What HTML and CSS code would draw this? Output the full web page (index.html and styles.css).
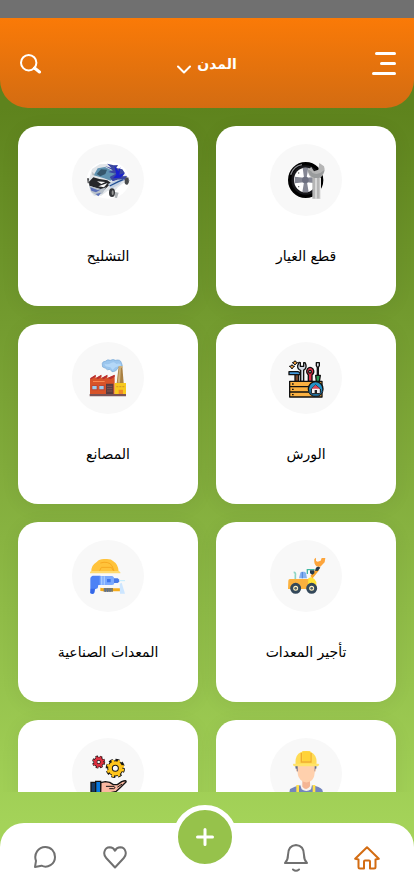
FILE: index.html
```html
<!DOCTYPE html>
<html lang="ar" dir="rtl">

<head>
    <meta charset="utf-8">
    <title>المدن</title>
    <meta name="viewport" content="width=device-width, initial-scale=1.0">
    <link rel="stylesheet" href="styles.css">
</head>

<body>
    <div class="status-bar"></div>
    <header class="header">
        <button class="icon-btn" type="button" aria-label="القائمة">
            <svg width="24" height="24" viewBox="0 0 24 24" fill="none" stroke="#fff" stroke-width="3" stroke-linecap="round">
                <path d="M4.500 1.500H22.500M9.500 11.500H22.500M1.500 21.500H22.500" />
            </svg>
        </button>
        <button class="city" type="button">
            <span>المدن</span>
            <svg width="14" height="9" viewBox="0 0 14 9" fill="none" stroke="#fff" stroke-width="2" stroke-linecap="round" stroke-linejoin="round">
                <path d="M1 1.500L7 7.500L13 1.500" />
            </svg>
        </button>
        <button class="icon-btn" type="button" aria-label="بحث">
            <svg width="22" height="20" viewBox="0 0 22 20" fill="none" stroke="#fff" stroke-linecap="round">
                <circle cx="8.700" cy="8.700" r="7.700" stroke-width="2" />
                <path d="M14.500 14L19.500 18" stroke-width="3" />
            </svg>
        </button>
    </header>

    <main class="content">
        <div class="grid">
            <a class="card" href="#">
                <svg class="pic" viewBox="6 9 216 216">
                    <ellipse cx="113" cy="117" rx="48" ry="49" fill="#17171b" stroke="#000" stroke-width="10" />
                    <path d="M68 101Q77 75 102 71" fill="none" stroke="#8b8b91" stroke-width="4" />
                    <ellipse cx="112" cy="117" rx="34" ry="37" fill="#fff" />
                    <path d="M104 80H121L116 110L144 107V127L117 124L122 153H103L108 124L80 127V107L108 110Z" fill="#858794" />
                    <circle cx="112" cy="117" r="10" fill="#6d7080" />
                    <g fill="#555"><circle cx="92" cy="96" r="2" /><circle cx="92" cy="137" r="2" /><circle cx="132" cy="96" r="2" /></g>
                    <path d="M133 173V111Q119 102 119 86L130 78L138 91L151 86L154 66L168 76Q173 91 164 103L157 110V173Z" fill="#b5b5b5" />
                    <path d="M144 106V173M157 110V173" stroke="#e9e9e9" stroke-width="4" />
                    <path d="M119 84Q122 105 139 111H153Q168 99 169 87Q158 98 146 99Q134 99 130 91Z" fill="#999b9c" />
                </svg>
                <span class="label">قطع الغيار</span>
            </a>
            <a class="card" href="#">
                <svg class="pic" viewBox="6 9 216 216">
                    <ellipse cx="114" cy="117" rx="64" ry="56" fill="#fff" />
                    <path d="M51 112H57V127H53ZM162 112L175 109L178 119L173 130L164 127Z" fill="#4f5052" />
                    <path d="M56 120L66 84L89 70L110 69L123 82L162 96L175 109L176 121L160 126L142 140L134 151L113 149L94 164L72 165L60 150Z" fill="#e2e6ea" />
                    <path d="M71 103L83 82L105 78L123 87L143 103L122 119L102 112Z" fill="#5f92b0" />
                    <path d="M80 99L93 85L111 86L106 99L91 106Z" fill="#35566c" />
                    <path d="M105 75L124 81L111 68L132 73L144 72L139 81L157 85L164 95L158 106L171 105L163 118L143 116L128 121L119 108L137 98L115 93L128 88Z" fill="#3b48a0" />
                    <path d="M133 73L145 91L151 78L148 101L165 96L151 110L129 112L139 101Z" fill="#1920d1" />
                    <path d="M57 122L70 109L88 114L112 118L123 126L103 147L80 142L58 134Z" fill="#252629" />
                    <path d="M81 121L106 123L94 129ZM85 136L113 126L102 139Z" fill="#f9f9f9" />
                    <path d="M57 134L92 144L109 139L97 158L78 163L64 153Z" fill="#b8c1ca" />
                    <path d="M61 139L83 147L94 145L78 154L64 149M77 159L93 155L85 166Z" fill="#5a6fb8" />
                    <path d="M114 129L143 116L163 115L146 131L124 143Z" fill="#c2cfe0" />
                    <path d="M119 135L145 122L160 116" fill="none" stroke="#214f93" stroke-width="4" />
                    <ellipse cx="126" cy="155" rx="9" ry="13" fill="#35373a" /><ellipse cx="128" cy="155" rx="3" ry="7" fill="#999" />
                    <ellipse cx="170" cy="120" rx="6" ry="11" fill="#484a4c" />
                    <path d="M135 153L146 155L141 171L134 170M67 92L74 102L67 103Z" fill="#b3b7ba" />
                </svg>
                <span class="label">التشليح</span>
            </a>
            <a class="card" href="#">
                <svg class="pic" viewBox="6 6 216 216">
                    <g stroke="#111" stroke-width="4" stroke-linejoin="round">
                        <path d="M72 74L75 78L80 79L75 82L72 87L69 82L64 79L69 78ZM81 62L84 66L89 68L84 71L81 75L78 71L73 68L78 66Z" fill="#eb9c3d" stroke-width="3" />
                        <path d="M81 98H92V124H81Z" fill="#74452b" />
                        <path d="M63 95H88Q97 95 97 104H63Z" fill="#4399dc" />
                        <path d="M98 124V91Q88 88 89 77L93 67L97 68V79H107V68L111 68Q117 79 112 86L107 91V124Z" fill="#d3dbe5" />
                        <path d="M121 124V105Q113 96 118 87Q126 77 135 87Q141 96 132 105V124Z" fill="#de2e46" />
                        <circle cx="126" cy="95" r="4" fill="#fff" />
                        <path d="M145 68H154V77L151 82V106H148V82L145 77Z" fill="#e3e6e9" />
                        <path d="M143 106H157L154 125H145Z" fill="#2c9b58" />
                        <path d="M65 124H162V171H65Z" fill="#fbb141" />
                        <path d="M65 140H128M65 156H128" fill="none" />
                        <circle cx="143" cy="147" r="22" fill="#2391c8" />
                        <path d="M130 147L143 135L157 147V161H130Z" fill="#f3eff2" stroke-width="3" />
                    </g>
                    <path d="M131 146L143 135L156 146Z" fill="#df4458" />
                    <path d="M140 150H147V161H140Z" fill="#252525" />
                    <path d="M72 132H77M72 148H77M72 164H77" stroke="#111" stroke-width="4" />
                    <path d="M123 152Q128 165 143 167Q157 166 163 152" fill="none" stroke="#23587b" stroke-width="4" />
                </svg>
                <span class="label">الورش</span>
            </a>
            <a class="card" href="#">
                <svg class="pic" viewBox="6 6 216 216">
                    <path d="M97 75Q95 65 106 64Q113 57 121 61Q130 56 136 61Q151 57 154 68L157 77L144 83L139 91Q132 96 126 95L120 88Q111 92 107 85L98 81Z" fill="#9bc6ee" stroke="#75a6d5" stroke-width="2" />
                    <path d="M103 71Q113 76 123 69Q133 64 139 72Q149 67 154 76L136 82L128 90L121 82L107 79Z" fill="#b4d8f8" />
                    <path d="M146 80H157L161 129H140Z" fill="#a98042" />
                    <path d="M148 81H153L150 128H143ZM146 78H158V83H146Z" fill="#ccb07c" />
                    <path d="M60 116L77 105V114L94 105V114L112 105V114L134 105V165H60Z" fill="#d75329" />
                    <path d="M60 115L77 104V110L63 118ZM78 114L94 104V110L84 118ZM95 114L112 104V110L101 118ZM113 114L134 104V110L122 118Z" fill="#b82f31" />
                    <path d="M69 123H104V126H69Z" fill="#fa8951" />
                    <path d="M65 136H83V151H65ZM87 136H104V151H87Z" fill="#ba4232" />
                    <path d="M67 138H80V148H67ZM88 138H101V148H88Z" fill="#9bcbed" />
                    <path d="M108 131H130V164H108Z" fill="#583c41" />
                    <path d="M111 139H127M111 146H127M111 153H127" stroke="#865351" stroke-width="3" />
                    <path d="M134 129H168V164H134Z" fill="#f7c91e" />
                    <path d="M139 138H145V142H139ZM148 138H154V142H148ZM157 138H163V142H157Z" fill="#d99e24" />
                    <path d="M146 149H159V164H146Z" fill="#f08b27" />
                    <path d="M59 162H168V169H59Z" fill="#785357" />
                </svg>
                <span class="label">المصانع</span>
            </a>
            <a class="card" href="#">
                <svg class="pic" viewBox="6 6 216 216">
                    <path d="M77 103Q84 103 82 113V123" fill="none" stroke="#8dd5c4" stroke-width="5" />
                    <path d="M118 108V95H140" fill="none" stroke="#43b8a3" stroke-width="4" />
                    <path d="M93 121L97 104Q98 101 103 101H109Q113 101 114 106L117 121Z" fill="#86b2f2" />
                    <path d="M103 102V121" stroke="#4e84d8" stroke-width="3" />
                    <path d="M61 128Q61 124 66 123H123L130 127V153H60Z" fill="#fbb13e" />
                    <path d="M121 121L130 117L139 123L145 132V149L129 136L120 142Z" fill="#ffe337" />
                    <path d="M127 114L146 91L154 96L134 121Z" fill="#f6a42e" />
                    <path d="M126 97H139V106L133 110L126 106ZM144 89L151 85L157 89L149 99L141 98Z" fill="#243b4d" />
                    <path d="M139 63L144 59V69L149 71L158 68L161 60H172L170 73L157 86L145 85Q137 77 139 63Z" fill="#fda53c" />
                    <circle cx="83" cy="151" r="12" fill="#fff1c0" stroke="#33485a" stroke-width="9" />
                    <circle cx="131" cy="151" r="12" fill="#fff1c0" stroke="#33485a" stroke-width="9" />
                    <g fill="#53636d"><circle cx="83" cy="151" r="4" /><circle cx="131" cy="151" r="4" /></g>
                </svg>
                <span class="label">تأجير المعدات</span>
            </a>
            <a class="card" href="#">
                <svg class="pic" viewBox="6 6 216 216">
                    <path d="M64 101Q63 81 81 71Q88 62 105 63Q123 61 130 70Q145 79 146 101Z" fill="#ffc33b" />
                    <path d="M91 75Q115 68 126 83L132 99M89 98L94 88H124L130 98" fill="none" stroke="#f6a922" stroke-width="3" />
                    <path d="M63 99H147L151 103V106H60V103Z" fill="#ffdb70" />
                    <path d="M91 113H68Q60 116 61 125V166L69 168L73 165L75 154L83 151L85 141L96 141Z" fill="#4d82f5" />
                    <path d="M62 152H75L72 165L67 168L61 165Z" fill="#3567e8" />
                    <path d="M89 114H127Q133 116 133 124V134Q133 141 126 141H89Z" fill="#7aa9fe" />
                    <path d="M95 115V140M103 115V140" stroke="#a7cbff" stroke-width="4" />
                    <path d="M111 123H122V133H111Z" fill="#3d76ef" />
                    <path d="M132 121H143L148 125V131L143 135H132Z" fill="#487ae9" />
                    <path d="M147 128H165" stroke="#c1ebff" stroke-width="3" />
                    <path d="M91 149L101 151H151V160H101L91 159Z" fill="#f7ad1c" />
                    <path d="M101 150H129V161H101Z" fill="#827c62" />
                    <path d="M106 151V162M113 151V162M120 151V162" stroke="#536fa2" stroke-width="3" />
                    <path d="M149 137L155 134L165 167H150Z" fill="#cde6ff" />
                </svg>
                <span class="label">المعدات الصناعية</span>
            </a>
            <a class="card" href="#" aria-label="العمال">
                <svg class="pic" viewBox="6 24 216 216">
                    <path d="M82 104Q81 118 89 125H139Q147 117 145 104Z" fill="#616d91" />
                    <path d="M64 187L66 177Q80 169 96 166H132Q155 170 163 179L165 187Q170 214 164 224H64Z" fill="#7385bd" />
                    <path d="M97 166L105 156H125L132 166L129 178Q115 188 101 178Z" fill="#f7f3ef" />
                    <path d="M103 148H126V169Q115 185 103 170Z" fill="#f4b594" />
                    <path d="M89 107H140V128Q139 146 127 154Q115 161 102 153Q89 143 89 128Z" fill="#ffd0ad" />
                    <path d="M86 115Q81 118 88 128M142 115Q147 119 140 128" fill="#ffcaa6" />
                    <path d="M83 103Q80 76 98 67Q114 59 129 66Q149 77 145 103Z" fill="#ffdc55" />
                    <path d="M100 69V96H129V69" fill="none" stroke="#efac2f" stroke-width="4" />
                    <path d="M103 64H127V93H103Z" fill="#ffd338" />
                    <path d="M76 101H151L154 104L150 109H78L75 105Z" fill="#ffe36b" />
                    <path d="M89 165V224M138 165V224" stroke="#ffe14c" stroke-width="8" />
                </svg>
            </a>
            <a class="card" href="#" aria-label="الخدمات">
                <svg class="pic" viewBox="6 24 216 216">
                    <g fill="none" stroke="#171717">
                        <circle cx="86" cy="96" r="15" stroke-width="9" stroke-dasharray="7 5" />
                        <circle cx="86" cy="96" r="10" stroke-width="12" />
                        <circle cx="86" cy="96" r="10" stroke="#dd303f" stroke-width="8" />
                        <circle cx="86" cy="96" r="15" stroke="#dd303f" stroke-width="6" stroke-dasharray="4 8" stroke-dashoffset="-1" />
                        <circle cx="136" cy="115" r="23" stroke-width="12" stroke-dasharray="11 7" />
                        <circle cx="136" cy="115" r="16" stroke-width="17" />
                        <circle cx="136" cy="115" r="16" stroke="#ffc51b" stroke-width="11" />
                        <circle cx="136" cy="115" r="22" stroke="#ffc51b" stroke-width="9" stroke-dasharray="7 11" stroke-dashoffset="-2" />
                    </g>
                    <path d="M92 158L106 155L119 157L130 164H142L155 155Q170 149 168 156L152 172L139 184L115 190H91Z" fill="#fbb8a1" stroke="#151515" stroke-width="4" stroke-linejoin="round" />
                    <path d="M109 169H132Q139 174 131 176H119M143 171L155 163" fill="none" stroke="#151515" stroke-width="3" stroke-linecap="round" />
                    <path d="M63 157H78V187H63Z" fill="#163c68" stroke="#141414" stroke-width="4" />
                    <path d="M77 154H92V189H77Z" fill="#0878df" stroke="#141414" stroke-width="4" />
                </svg>
            </a>
        </div>
    </main>

    <nav class="nav">
        <a class="nav-link active" href="#" aria-label="الرئيسية">
            <svg width="26" height="24" viewBox="0 0 26 24" fill="none" stroke="currentColor" stroke-width="2" stroke-linejoin="round">
                <path d="M13 1.200L1.200 12.800L4.500 13.500V21Q4.500 22.500 6 22.500H10V15.500Q10 14.500 11 14.500H15Q16 14.500 16 15.500V22.500H20Q21.500 22.500 21.500 21V13.500L24.800 12.800Z" />
            </svg>
        </a>
        <a class="nav-link" href="#" aria-label="الإشعارات">
            <svg width="24" height="28" viewBox="0 0 24 28" fill="none" stroke="currentColor" stroke-width="2" stroke-linecap="round" stroke-linejoin="round">
                <path d="M12 1Q4 1.500 4 11Q4 16 1 19H23Q20 16 20 11Q20 1.500 12 1ZM9 25.500Q12 28 15 25.500" />
            </svg>
        </a>
        <button class="add" type="button" aria-label="إضافة">
            <svg width="18" height="18" viewBox="0 0 18 18" fill="none" stroke="#fff" stroke-width="3" stroke-linecap="round">
                <path d="M9 1.500V16.500M1.500 9H16.500" />
            </svg>
        </button>
        <a class="nav-link" href="#" aria-label="المفضلة">
            <svg width="24" height="24" viewBox="0 0 24 24" fill="none" stroke="currentColor" stroke-width="2" stroke-linejoin="round">
                <path d="M12 21.500L3.200 12C-0.500 8 1.400 1.500 6.700 1.300C9.500 1.300 11.200 3 12 4.700C12.800 3 14.500 1.300 17.300 1.300C22.600 1.500 24.500 8 20.800 12Z" />
            </svg>
        </a>
        <a class="nav-link" href="#" aria-label="الرسائل">
            <svg width="22" height="24" viewBox="0 0 22 24" fill="none" stroke="currentColor" stroke-width="2" stroke-linejoin="round">
                <path d="M1 21L2 14.800C-0.500 8 4.200 1 11.300 1C17 1 21 5.500 21 11C21 18.500 13.500 22.500 7.500 19.700Z" />
            </svg>
        </a>
    </nav>
</body>

</html>
```
FILE: styles.css
```css
* {
    box-sizing: border-box;
}

body {
    display: flex;
    flex-direction: column;
    height: 100vh;
    margin: 0;
    overflow: hidden;
    background: linear-gradient(#5e831d, #5e831d 12%, #a4d359 92%);
    font-family: "DejaVu Sans", sans-serif;
    color: #000;
}

button {
    padding: 0;
    border: 0;
    background: none;
    font: inherit;
    color: inherit;
    cursor: pointer;
}

svg {
    display: block;
}

.status-bar {
    flex: none;
    height: 18px;
    background: #707070;
}

.header {
    flex: none;
    display: flex;
    align-items: center;
    justify-content: space-between;
    height: 90px;
    padding: 2px 18px 0 20px;
    border-radius: 0 0 28px 28px;
    background: linear-gradient(#fa7a07, #d36c12);
}

.city {
    display: flex;
    align-items: center;
    gap: 6px;
    color: #fff;
    font-size: 14px;
    font-weight: bold;
}

.city svg {
    margin-top: 10px;
}

.content {
    flex: 1;
    min-height: 0;
    margin-bottom: 31px;
    overflow: hidden;
}

.grid {
    display: grid;
    grid-template-columns: 1fr 1fr;
    grid-auto-rows: 180px;
    gap: 18px;
    padding: 18px;
}

.card {
    display: flex;
    flex-direction: column;
    align-items: center;
    gap: 30px;
    padding-top: 18px;
    border-radius: 20px;
    background: #fff;
    box-shadow: 0 3px 20px rgba(0, 0, 0, 0.06);
    color: #000;
    text-decoration: none;
}

.pic {
    width: 72px;
    height: 72px;
    border-radius: 50%;
    background: #f8f8f8;
}

.label {
    font-size: 14px;
    line-height: 20px;
}

.nav {
    flex: none;
    display: flex;
    align-items: center;
    justify-content: space-between;
    height: 73px;
    padding: 0 34px 4px;
    border-radius: 24px 24px 0 0;
    background: #fff;
}

.nav-link {
    color: #707070;
}

.active {
    color: #d36c12;
}

.add {
    display: flex;
    align-items: center;
    justify-content: center;
    width: 64px;
    height: 64px;
    margin-bottom: 42px;
    border: 5px solid #fff;
    border-radius: 50%;
    background: #96c24b;
}
```
